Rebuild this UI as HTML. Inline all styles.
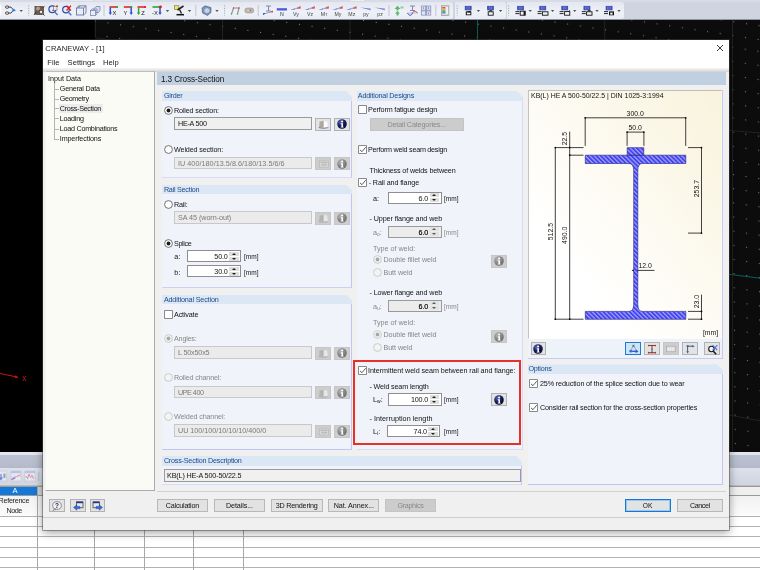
<!DOCTYPE html><html><head><meta charset="utf-8"><title>CRANEWAY - [1]</title><style>
*{box-sizing:border-box;margin:0;padding:0}
html,body{will-change:transform;width:760px;height:570px;overflow:hidden;background:#000}
body{position:relative;font-family:"Liberation Sans",sans-serif;font-size:7.2px;color:#111;line-height:1}
.a{position:absolute}
.t{position:absolute;white-space:nowrap;line-height:10px;height:10px}
.dlg{position:absolute;overflow:hidden;left:43px;top:40px;width:686.4px;height:490px;background:#f0f0f0;box-shadow:0 0 0 0.7px rgba(70,70,70,.7),0 2px 9px rgba(0,0,0,.42)}
.grp{position:absolute;background:#f0f4fa;clip-path:polygon(0 0,calc(100% - 5.8px) 0,100% 5.8px,100% 100%,0 100%)}
.grp:before{content:"";position:absolute;right:0;top:5.8px;bottom:0;width:1px;background:#c2c4f3}
.grp:after{content:"";position:absolute;left:0;right:0;bottom:0;height:1px;background:#c2c4f3}
.gh{position:absolute;left:0;top:0;right:0;height:9.6px;background:#dce7f6;color:#1c4a8a;line-height:10px;padding-left:0.8px}
.inp{position:absolute;background:#f0f0f0;border:1px solid #9a9a9a;line-height:12px;padding-left:3px;white-space:nowrap;height:12.5px}
.inp.d{background:#ebebeb;border-color:#c8c8c8;color:#7a7a7a}
.spin{position:absolute;background:#fff;border:1px solid #8e8e8e;height:12.3px;line-height:11.6px;text-align:right;padding-right:12.4px;white-space:nowrap}
.spin.d{background:#ececec;border-color:#9a9a9a;color:#151515;text-shadow:0 0 0.5px #444}
.spin i{position:absolute;right:1.3px;top:0.8px;width:9.7px;bottom:0.8px;background:linear-gradient(#dedede 0,#dedede 46%,#fff 46%,#fff 54%,#dedede 54%)}
.spin i:before{content:"";position:absolute;left:2.4px;top:0.9px;border:2.4px solid transparent;border-top:0;border-bottom:2.8px solid #222}
.spin i:after{content:"";position:absolute;left:2.4px;bottom:0.9px;border:2.4px solid transparent;border-bottom:0;border-top:2.8px solid #222}
.spin.d i{background:linear-gradient(#e2e2e2 0,#e2e2e2 46%,#ececec 46%,#ececec 54%,#e2e2e2 54%)}
.spin.d i:before{border-bottom-color:#5c5c5c}.spin.d i:after{border-top-color:#5c5c5c}
.btn{position:absolute;background:#e2e2e2;border:1px solid #b8b8b8;text-align:center;white-space:nowrap;line-height:11px;height:13px}
.btn.d{background:#cccccc;border-color:#c4c4c4;color:#8a8a8a}
.ib{position:absolute;width:15.5px;height:13px;background:#e3e3e3;border:1px solid #b2b2b2}
.ib.d{background:#cdcdcd;border-color:#c6c6c6}
.cb{position:absolute;width:8.9px;height:8.9px;background:#fff;border:1px solid #666;border-radius:0.8px}
.cb.c:after{content:"";position:absolute;left:2.5px;top:-0.1px;width:2.6px;height:5.6px;border:solid #333;border-width:0 0.8px 0.8px 0;transform:rotate(40deg)}
.rb{position:absolute;width:8.4px;height:8.4px;border-radius:50%;background:#fff;border:1px solid #555}
.rb.c:after{content:"";position:absolute;left:1.6px;top:1.6px;width:3.2px;height:3.2px;border-radius:50%;background:#222}
.rb.d{border-color:#bbb;background:#f6f6f6}.rb.d.c:after{background:#aaa}
.g{color:#868686}
</style></head><body>
<svg width="0" height="0" style="position:absolute"><defs><radialGradient id="gie" cx="0.35" cy="0.3" r="0.75"><stop offset="0" stop-color="#5868b4"/><stop offset="0.55" stop-color="#141c5c"/><stop offset="1" stop-color="#05052a"/></radialGradient><radialGradient id="gid" cx="0.35" cy="0.3" r="0.75"><stop offset="0" stop-color="#b4b4b4"/><stop offset="0.6" stop-color="#858585"/><stop offset="1" stop-color="#6a6a6a"/></radialGradient></defs></svg>
<svg class="a" style="left:0;top:20px" width="760" height="432" viewBox="0 20 760 432"><defs><pattern id="dots" width="1" height="1" patternUnits="userSpaceOnUse" patternTransform="matrix(12.63 1.95 1 -13.8 107.4 23.3)"><rect x="0" y="0" width="0.085" height="0.08" fill="#7a7a7a"/></pattern><pattern id="dots2" width="1" height="1" patternUnits="userSpaceOnUse" patternTransform="matrix(12.63 1.95 0.1 14.15 732.7 145.7)"><rect x="0" y="0" width="0.085" height="0.075" fill="#7a7a7a"/></pattern></defs><rect x="0" y="20" width="760" height="432" fill="#000"/><rect x="95" y="20" width="665" height="20" fill="#0c0c0c"/><rect x="729" y="40" width="31" height="412" fill="#0c0c0c"/><rect x="95" y="20" width="665" height="20" fill="url(#dots)"/><rect x="729" y="40" width="31" height="412" fill="url(#dots2)"/><path d="M95.3 20V37.5" stroke="#3a3a3a" stroke-width="0.6"/><path d="M95 37.5Q103 39 110 40" stroke="#2a2a2a" stroke-width="0.6" fill="none"/><path d="M222.5 20V40M350 20V40M604.7 20V40M732.5 20V452" stroke="#2c2c2c" stroke-width="0.7"/><line x1="0" y1="373.5" x2="17" y2="377" stroke="#d01010" stroke-width="1"/><path d="M15 375.3 L19 377.4 L15 378.3Z" fill="#d01010"/><text x="22.3" y="380.6" font-size="8.6" fill="#c81818" font-family="Liberation Sans, sans-serif">x</text><line x1="477.5" y1="20" x2="477.5" y2="40" stroke="#0a5a5a" stroke-width="1"/><line x1="729" y1="130.3" x2="760" y2="133" stroke="#2c2c2c" stroke-width="0.7"/><line x1="729" y1="274.3" x2="760" y2="278.2" stroke="#0a6a6a" stroke-width="0.9"/><line x1="729" y1="415" x2="760" y2="420.8" stroke="#2c2c2c" stroke-width="0.7"/></svg>
<div class="a" style="left:0;top:0;width:760px;height:20px;background:#cfd4e1"></div>
<div class="a" style="left:0;top:0;width:760px;height:2.4px;background:#d7dbe6"></div>
<div class="a" style="left:71px;top:0;width:22px;height:1.2px;background:#e6e9f0"></div><div class="a" style="left:95px;top:0;width:38px;height:1.2px;background:#e0e3ec"></div><div class="a" style="left:351px;top:0;width:12.5px;height:1.2px;background:#eceef4"></div>
<div class="a" style="left:0.0px;top:2.4px;width:453.0px;height:16.4px;background:linear-gradient(#e4e7f0,#eff1f8 60%,#e9ecf4);border-radius:0 2.5px 2.5px 0"></div>
<div class="a" style="left:455.0px;top:2.4px;width:51.0px;height:16.4px;background:linear-gradient(#e4e7f0,#eff1f8 60%,#e9ecf4);border-radius:0 2.5px 2.5px 0"></div>
<div class="a" style="left:507.0px;top:2.4px;width:116.7px;height:16.4px;background:linear-gradient(#e4e7f0,#eff1f8 60%,#e9ecf4);border-radius:0 2.5px 2.5px 0"></div>
<div class="a" style="left:0;top:18.8px;width:760px;height:1.2px;background:linear-gradient(#c4c9d6,#5a5d66)"></div>
<div class="a" style="left:0;top:452px;width:760px;height:118px;background:#fff"></div>
<div class="a" style="left:0;top:452px;width:760px;height:3px;background:#e2e5ed"></div>
<div class="a" style="left:0;top:454.6px;width:760px;height:13.6px;background:linear-gradient(#bcc2d0,#b4bac9)"></div>
<div class="a" style="left:0;top:468px;width:760px;height:16.5px;background:linear-gradient(#dde1ec,#cfd4e0)"></div>
<div class="a" style="left:0;top:484.3px;width:760px;height:2.4px;background:linear-gradient(#e8e8e8,#8c8c8c)"></div>
<svg class="a" style="left:0;top:470px" width="42" height="13" viewBox="0 0 42 13"><rect x="-3" y="1" width="9.5" height="10" fill="#e4e8f2" stroke="#b8bdd0" stroke-width="0.5"/><path d="M1 4V9M-0.5 7.5L1 9.5L2.5 7.5" stroke="#6a86d0" stroke-width="1.2" fill="none"/><rect x="3.4" y="3.5" width="2" height="4.5" fill="#9a9eb0"/><rect x="11" y="1" width="10" height="10" fill="#e9ecf4" stroke="#b8bdd0" stroke-width="0.5"/><rect x="11" y="1" width="10" height="2.2" fill="#b9c4e2"/><path d="M11.5 8.7L20.5 4.8" stroke="#e06a78" stroke-width="0.8"/><path d="M11.5 9.6L15.5 8" stroke="#5a6ee0" stroke-width="1"/><path d="M11 6.5H21M14.3 3.2V11M17.6 3.2V11" stroke="#c4c9da" stroke-width="0.4"/><rect x="25" y="1" width="10" height="10" fill="#e9ecf4" stroke="#b8bdd0" stroke-width="0.5"/><rect x="25" y="1" width="10" height="2.2" fill="#b9c4e2"/><path d="M26 6L27.5 8.5L29 4L30.5 7.5L32 5L33.5 9" stroke="#e8687c" stroke-width="0.8" fill="none"/><path d="M25 6.5H35M28.3 3.2V11M31.6 3.2V11" stroke="#c4c9da" stroke-width="0.4"/><path d="M38.7 1.5V11" stroke="#aab0c2" stroke-width="0.7"/></svg>
<div class="a" style="left:0;top:486.7px;width:760px;height:8.6px;background:#efefef"></div>
<div class="a" style="left:37.5px;top:486.7px;width:5.5px;height:8.6px;background:#d4d4d4"></div>
<div class="a" style="left:0;top:486.7px;width:37px;height:8.4px;background:#1478d7"></div>
<div class="t" style="left:11px;top:486px;width:8px;text-align:center;color:#fff;font-size:7.6px">A</div>
<div class="a" style="left:0;top:495.1px;width:760px;height:1px;background:#9a9a9a"></div>
<div class="a" style="left:0;top:496px;width:760px;height:20.4px;background:linear-gradient(#f1f1f1,#fcfcfc)"></div>
<div class="t" style="left:-1.4px;top:495.8px;color:#222;letter-spacing:-0.295px">Reference</div>
<div class="t" style="left:6.4px;top:505.6px;color:#222;letter-spacing:-0.413px">Node</div>
<div class="a" style="left:0;top:516.3px;width:760px;height:1px;background:#b2b2b2"></div>
<div class="a" style="left:0;top:526.2px;width:760px;height:1px;background:#b2b2b2"></div>
<div class="a" style="left:0;top:536.3px;width:760px;height:1px;background:#b2b2b2"></div>
<div class="a" style="left:0;top:546.5px;width:760px;height:1px;background:#b2b2b2"></div>
<div class="a" style="left:0;top:556.6px;width:760px;height:1px;background:#b2b2b2"></div>
<div class="a" style="left:0;top:566.8px;width:760px;height:1px;background:#b2b2b2"></div>
<div class="a" style="left:37.3px;top:486.7px;width:1px;height:84px;background:#a8a8a8"></div>
<div class="a" style="left:93.8px;top:486.7px;width:1px;height:84px;background:#a8a8a8"></div>
<div class="a" style="left:143.8px;top:486.7px;width:1px;height:84px;background:#a8a8a8"></div>
<div class="a" style="left:193.3px;top:486.7px;width:1px;height:84px;background:#a8a8a8"></div>
<div class="a" style="left:243.3px;top:486.7px;width:1px;height:84px;background:#a8a8a8"></div>
<div class="dlg">
<div class="a" style="left:0;top:0;width:687px;height:28px;background:#fff"></div>
<div class="t" style="left:2.3px;top:3.5px;font-size:7.6px;color:#222;letter-spacing:0.1px">CRANEWAY - [1]</div>
<svg class="a" style="left:673px;top:4px" width="8" height="8" viewBox="0 0 8 8"><path d="M1 1L7 7M7 1L1 7" stroke="#222" stroke-width="0.9" fill="none"/></svg>
<div class="t" style="left:4.3px;top:17.5px;font-size:7.6px;color:#222">File</div>
<div class="t" style="left:24.6px;top:17.5px;font-size:7.6px;color:#222">Settings</div>
<div class="t" style="left:60.0px;top:17.5px;font-size:7.6px;color:#222">Help</div>
<div class="a" style="left:0;top:28px;width:687px;height:4px;background:linear-gradient(#f6f6f6,#e2e2e2 60%,#cfcfcf)"></div>
<div class="a" style="left:1.5px;top:31px;width:110.5px;height:420px;background:#fbfbf6;border:1px solid #ababab;border-left-color:#f4f4f0;border-top-color:#bebebe"></div>
<div class="a" style="left:10.5px;top:42px;width:1px;height:56.5px;background:#b4b4b4"></div>
<div class="t" style="left:5px;top:33.5px;letter-spacing:-0.008px">Input Data</div>
<div class="a" style="left:11px;top:48.5px;width:5px;height:1px;background:#b4b4b4"></div>
<div class="t" style="left:16.8px;top:43.9px;letter-spacing:-0.234px">General Data</div>
<div class="a" style="left:11px;top:58.5px;width:5px;height:1px;background:#b4b4b4"></div>
<div class="t" style="left:16.8px;top:53.9px;letter-spacing:-0.340px">Geometry</div>
<div class="a" style="left:11px;top:68.3px;width:5px;height:1px;background:#b4b4b4"></div>
<div class="a" style="left:15.7px;top:63.9px;width:44.5px;height:9.2px;background:#ececec"></div>
<div class="t" style="left:16.8px;top:63.7px;letter-spacing:-0.297px">Cross-Section</div>
<div class="a" style="left:11px;top:78.4px;width:5px;height:1px;background:#b4b4b4"></div>
<div class="t" style="left:16.8px;top:73.8px;letter-spacing:-0.249px">Loading</div>
<div class="a" style="left:11px;top:88.5px;width:5px;height:1px;background:#b4b4b4"></div>
<div class="t" style="left:16.8px;top:83.9px;letter-spacing:-0.263px">Load Combinations</div>
<div class="a" style="left:11px;top:98.5px;width:5px;height:1px;background:#b4b4b4"></div>
<div class="t" style="left:16.8px;top:93.9px;letter-spacing:-0.135px">Imperfections</div>
<div class="a" style="left:114px;top:32px;width:569px;height:13px;background:#c1d0e1"></div>
<div class="t" style="left:118px;top:35.1px;font-size:8.2px;color:#111;letter-spacing:-0.118px">1.3 Cross-Section</div>
<div class="a" style="left:114px;top:450.5px;width:569px;height:1px;background:#d2d2d2"></div>
<div class="a" style="left:0;top:476.5px;width:686px;height:1px;background:#cdcdcd"></div>
<div class="grp" style="left:119.2px;top:51.0px;width:189.8px;height:86.5px"><div class="gh" style="letter-spacing:-0.242px;padding-left:1.7px">Girder</div></div>
<svg class="a" style="left:120.5px;top:65.5px" width="9" height="9" viewBox="0 0 9 9"><circle cx="4.5" cy="4.5" r="3.9" fill="#fff" stroke="#4a4a4a" stroke-width="0.75"/><circle cx="4.5" cy="4.5" r="1.9" fill="#1a1a1a"/></svg>
<div class="t " style="left:131.0px;top:65.5px;letter-spacing:-0.151px;">Rolled section:</div>
<div class="inp" style="left:131.0px;top:77.3px;width:138.3px;letter-spacing:-0.265px">HE-A 500</div>
<div class="ib" style="left:272.0px;top:77.7px"><svg class="a" style="left:2.2px;top:1.6px" width="11" height="9" viewBox="0 0 11 9"><path d="M0.8 7.6L5.4 8.2L10.3 7.6" stroke="#56648c" stroke-width="0.9" fill="none"/><path d="M1.6 1.6L5.2 0.9V7.2L1.2 7.3Z" fill="#b4a898"/><path d="M5.4 0.9L9.2 1.5L9.9 7.2L5.4 7.2Z" fill="#fbfbfb"/><path d="M5.3 0.9V7.3" stroke="#6a6a6a" stroke-width="0.4"/></svg></div>
<div class="ib" style="left:291.3px;top:77.7px"><svg class="a" style="left:1.8px;top:0.5px" width="10" height="10" viewBox="0 0 9 9"><circle cx="4.5" cy="4.5" r="4.3" fill="url(#gie)"/><circle cx="4.6" cy="2.3" r="0.95" fill="#fff"/><path d="M3.4 3.9h2v3h.6v.8H3.3v-.8h.7V4.7h-.6z" fill="#fff"/></svg></div>
<svg class="a" style="left:120.5px;top:105.0px" width="9" height="9" viewBox="0 0 9 9"><circle cx="4.5" cy="4.5" r="3.9" fill="#fff" stroke="#4a4a4a" stroke-width="0.75"/></svg>
<div class="t " style="left:131.0px;top:105.0px;letter-spacing:-0.134px;">Welded section:</div>
<div class="inp d" style="left:131.0px;top:116.7px;width:138.3px;letter-spacing:0.048px">IU 400/180/13.5/8.6/180/13.5/6/6</div>
<div class="ib d" style="left:272.0px;top:117.2px"><svg class="a" style="left:2.5px;top:2px" width="10" height="8" viewBox="0 0 10 8"><rect x="0.7" y="1" width="8.6" height="6" fill="#d9d9d9" stroke="#b0b0b0" stroke-width="0.5"/><path d="M1.6 2.6h6.8" stroke="#a6a6a6" stroke-width="0.7"/><path d="M2.4 5c1-1.2 2 .8 3 0s1.6-.8 2.6 .2" stroke="#9a9a9a" stroke-width="0.8" fill="none"/></svg></div>
<div class="ib d" style="left:291.3px;top:117.2px"><svg class="a" style="left:1.8px;top:0.5px" width="10" height="10" viewBox="0 0 9 9"><circle cx="4.5" cy="4.5" r="4.3" fill="url(#gid)"/><circle cx="4.6" cy="2.3" r="0.95" fill="#fff"/><path d="M3.4 3.9h2v3h.6v.8H3.3v-.8h.7V4.7h-.6z" fill="#fff"/></svg></div>
<div class="grp" style="left:119.2px;top:144.7px;width:189.8px;height:103.0px"><div class="gh" style="letter-spacing:-0.241px;padding-left:1.7px">Rail Section</div></div>
<svg class="a" style="left:120.5px;top:159.5px" width="9" height="9" viewBox="0 0 9 9"><circle cx="4.5" cy="4.5" r="3.9" fill="#fff" stroke="#4a4a4a" stroke-width="0.75"/></svg>
<div class="t " style="left:131.0px;top:159.5px;letter-spacing:-0.187px;">Rail:</div>
<div class="inp d" style="left:131.0px;top:171.2px;width:138.3px;letter-spacing:-0.046px">SA 45 (worn-out)</div>
<div class="ib d" style="left:272.0px;top:171.7px"><svg class="a" style="left:2.2px;top:1.6px" width="11" height="9" viewBox="0 0 11 9"><path d="M0.8 7.6L5.4 8.2L10.3 7.6" stroke="#a4a4a4" stroke-width="0.9" fill="none"/><path d="M1.6 1.6L5.2 0.9V7.2L1.2 7.3Z" fill="#b4b4b4"/><path d="M5.4 0.9L9.2 1.5L9.9 7.2L5.4 7.2Z" fill="#e6e6e6"/><path d="M5.3 0.9V7.3" stroke="#999" stroke-width="0.4"/></svg></div>
<div class="ib d" style="left:291.3px;top:171.7px"><svg class="a" style="left:1.8px;top:0.5px" width="10" height="10" viewBox="0 0 9 9"><circle cx="4.5" cy="4.5" r="4.3" fill="url(#gid)"/><circle cx="4.6" cy="2.3" r="0.95" fill="#fff"/><path d="M3.4 3.9h2v3h.6v.8H3.3v-.8h.7V4.7h-.6z" fill="#fff"/></svg></div>
<svg class="a" style="left:120.5px;top:198.8px" width="9" height="9" viewBox="0 0 9 9"><circle cx="4.5" cy="4.5" r="3.9" fill="#fff" stroke="#4a4a4a" stroke-width="0.75"/><circle cx="4.5" cy="4.5" r="1.9" fill="#1a1a1a"/></svg>
<div class="t " style="left:131.0px;top:198.8px;letter-spacing:-0.355px;">Splice</div>
<div class="t " style="left:131.3px;top:212.0px;letter-spacing:0.124px;">a:</div>
<div class="spin" style="left:144.1px;top:210.0px;width:54.0px;letter-spacing:-0.159px">50.0<i></i></div>
<div class="t " style="left:201.0px;top:212.0px;font-size:6.5px;">[mm]</div>
<div class="t " style="left:131.3px;top:227.5px;letter-spacing:0.319px;">b:</div>
<div class="spin" style="left:144.1px;top:225.1px;width:54.0px;letter-spacing:-0.159px">30.0<i></i></div>
<div class="t " style="left:201.0px;top:227.5px;font-size:6.5px;">[mm]</div>
<div class="grp" style="left:119.2px;top:254.7px;width:189.8px;height:155.5px"><div class="gh" style="letter-spacing:-0.158px;padding-left:1.7px">Additional Section</div></div>
<svg class="a" style="left:121.0px;top:269.6px" width="9" height="9" viewBox="0 0 9 9"><rect x="0.4" y="0.4" width="8.2" height="8.2" rx="0.6" fill="#fff" stroke="#5c5c5c" stroke-width="0.8"/></svg>
<div class="t " style="left:131.0px;top:269.5px;letter-spacing:-0.164px;">Activate</div>
<svg class="a" style="left:120.5px;top:294.1px" width="9" height="9" viewBox="0 0 9 9"><circle cx="4.5" cy="4.5" r="3.9" fill="#f4f4f4" stroke="#bdbdbd" stroke-width="0.75"/><circle cx="4.5" cy="4.5" r="1.9" fill="#a8a8a8"/></svg>
<div class="t g" style="left:131.0px;top:294.1px;letter-spacing:-0.205px;">Angles:</div>
<div class="inp d" style="left:131.0px;top:306.0px;width:138.3px;letter-spacing:-0.167px">L 50x50x5</div>
<div class="ib d" style="left:272.0px;top:306.5px"><svg class="a" style="left:2.2px;top:1.6px" width="11" height="9" viewBox="0 0 11 9"><path d="M0.8 7.6L5.4 8.2L10.3 7.6" stroke="#a4a4a4" stroke-width="0.9" fill="none"/><path d="M1.6 1.6L5.2 0.9V7.2L1.2 7.3Z" fill="#b4b4b4"/><path d="M5.4 0.9L9.2 1.5L9.9 7.2L5.4 7.2Z" fill="#e6e6e6"/><path d="M5.3 0.9V7.3" stroke="#999" stroke-width="0.4"/></svg></div>
<div class="ib d" style="left:291.3px;top:306.5px"><svg class="a" style="left:1.8px;top:0.5px" width="10" height="10" viewBox="0 0 9 9"><circle cx="4.5" cy="4.5" r="4.3" fill="url(#gid)"/><circle cx="4.6" cy="2.3" r="0.95" fill="#fff"/><path d="M3.4 3.9h2v3h.6v.8H3.3v-.8h.7V4.7h-.6z" fill="#fff"/></svg></div>
<svg class="a" style="left:120.5px;top:332.5px" width="9" height="9" viewBox="0 0 9 9"><circle cx="4.5" cy="4.5" r="3.9" fill="#f4f4f4" stroke="#bdbdbd" stroke-width="0.75"/></svg>
<div class="t g" style="left:131.0px;top:332.5px;letter-spacing:-0.165px;">Rolled channel:</div>
<div class="inp d" style="left:131.0px;top:345.5px;width:138.3px;letter-spacing:-0.478px">UPE 400</div>
<div class="ib d" style="left:272.0px;top:346.0px"><svg class="a" style="left:2.2px;top:1.6px" width="11" height="9" viewBox="0 0 11 9"><path d="M0.8 7.6L5.4 8.2L10.3 7.6" stroke="#a4a4a4" stroke-width="0.9" fill="none"/><path d="M1.6 1.6L5.2 0.9V7.2L1.2 7.3Z" fill="#b4b4b4"/><path d="M5.4 0.9L9.2 1.5L9.9 7.2L5.4 7.2Z" fill="#e6e6e6"/><path d="M5.3 0.9V7.3" stroke="#999" stroke-width="0.4"/></svg></div>
<div class="ib d" style="left:291.3px;top:346.0px"><svg class="a" style="left:1.8px;top:0.5px" width="10" height="10" viewBox="0 0 9 9"><circle cx="4.5" cy="4.5" r="4.3" fill="url(#gid)"/><circle cx="4.6" cy="2.3" r="0.95" fill="#fff"/><path d="M3.4 3.9h2v3h.6v.8H3.3v-.8h.7V4.7h-.6z" fill="#fff"/></svg></div>
<svg class="a" style="left:120.5px;top:371.7px" width="9" height="9" viewBox="0 0 9 9"><circle cx="4.5" cy="4.5" r="3.9" fill="#f4f4f4" stroke="#bdbdbd" stroke-width="0.75"/></svg>
<div class="t g" style="left:131.0px;top:371.7px;letter-spacing:-0.148px;">Welded channel:</div>
<div class="inp d" style="left:131.0px;top:384.2px;width:138.3px;letter-spacing:-0.007px">UU 100/100/10/10/10/400/0</div>
<div class="ib d" style="left:272.0px;top:384.7px"><svg class="a" style="left:2.5px;top:2px" width="10" height="8" viewBox="0 0 10 8"><rect x="0.7" y="1" width="8.6" height="6" fill="#d9d9d9" stroke="#b0b0b0" stroke-width="0.5"/><path d="M1.6 2.6h6.8" stroke="#a6a6a6" stroke-width="0.7"/><path d="M2.4 5c1-1.2 2 .8 3 0s1.6-.8 2.6 .2" stroke="#9a9a9a" stroke-width="0.8" fill="none"/></svg></div>
<div class="ib d" style="left:291.3px;top:384.7px"><svg class="a" style="left:1.8px;top:0.5px" width="10" height="10" viewBox="0 0 9 9"><circle cx="4.5" cy="4.5" r="4.3" fill="url(#gid)"/><circle cx="4.6" cy="2.3" r="0.95" fill="#fff"/><path d="M3.4 3.9h2v3h.6v.8H3.3v-.8h.7V4.7h-.6z" fill="#fff"/></svg></div>
<div class="grp" style="left:119.2px;top:416.0px;width:359.8px;height:28.5px"><div class="gh" style="letter-spacing:-0.212px;padding-left:1.7px">Cross-Section Description</div></div>
<div class="inp" style="padding-left:1.7px;left:121.4px;top:429.0px;width:356.5px;letter-spacing:-0.147px">KB(L) HE-A 500-50/22.5</div>
<div class="grp" style="left:314.0px;top:51.0px;width:165.5px;height:358.5px"><div class="gh" style="letter-spacing:-0.182px;padding-left:0.8px">Additional Designs</div></div>
<svg class="a" style="left:315.0px;top:65.1px" width="9" height="9" viewBox="0 0 9 9"><rect x="0.4" y="0.4" width="8.2" height="8.2" rx="0.6" fill="#fff" stroke="#5c5c5c" stroke-width="0.8"/></svg>
<div class="t " style="left:325.0px;top:65.0px;letter-spacing:-0.151px;">Perform fatigue design</div>
<div class="btn d" style="left:326.7px;top:78.2px;width:94.0px;letter-spacing:-0.142px;text-indent:-0.142px;">Detail Categories...</div>
<svg class="a" style="left:315.0px;top:105.1px" width="9" height="9" viewBox="0 0 9 9"><rect x="0.4" y="0.4" width="8.2" height="8.2" rx="0.6" fill="#fff" stroke="#5c5c5c" stroke-width="0.8"/><path d="M2 4.9L4 6.7L7.7 2.2" fill="none" stroke="#2a2a2a" stroke-width="0.75"/></svg>
<div class="t " style="left:325.0px;top:105.0px;letter-spacing:-0.252px;">Perform weld seam design</div>
<div class="t " style="left:326.5px;top:125.8px;letter-spacing:-0.149px;">Thickness of welds between</div>
<svg class="a" style="left:315.0px;top:138.2px" width="9" height="9" viewBox="0 0 9 9"><rect x="0.4" y="0.4" width="8.2" height="8.2" rx="0.6" fill="#fff" stroke="#5c5c5c" stroke-width="0.8"/><path d="M2 4.9L4 6.7L7.7 2.2" fill="none" stroke="#2a2a2a" stroke-width="0.75"/></svg>
<div class="t " style="left:325.7px;top:138.1px;letter-spacing:-0.114px;">- Rail and flange</div>
<div class="t " style="left:330.0px;top:153.5px;letter-spacing:0.124px;">a:</div>
<div class="spin" style="left:345.0px;top:151.5px;width:53.5px;letter-spacing:-0.141px">6.0<i></i></div>
<div class="t " style="left:401.0px;top:153.5px;font-size:6.5px;">[mm]</div>
<div class="t " style="left:326.5px;top:173.9px;letter-spacing:-0.098px;">- Upper flange and web</div>
<div class="t g" style="left:330.0px;top:187.5px;letter-spacing:0.000px;">a<span style="font-size:5px;vertical-align:-1px">o</span>:</div>
<div class="spin d" style="left:345.0px;top:185.5px;width:53.5px;letter-spacing:-0.141px">6.0<i></i></div>
<div class="t g" style="left:401.0px;top:187.5px;font-size:6.5px;">[mm]</div>
<div class="t g" style="left:330.0px;top:203.5px;letter-spacing:-0.016px;">Type of weld:</div>
<svg class="a" style="left:330.1px;top:215.2px" width="9" height="9" viewBox="0 0 9 9"><circle cx="4.5" cy="4.5" r="3.9" fill="#f4f4f4" stroke="#bdbdbd" stroke-width="0.75"/><circle cx="4.5" cy="4.5" r="1.9" fill="#a8a8a8"/></svg>
<div class="t g" style="left:340.4px;top:215.2px;letter-spacing:-0.071px;">Double fillet weld</div>
<svg class="a" style="left:330.1px;top:227.9px" width="9" height="9" viewBox="0 0 9 9"><circle cx="4.5" cy="4.5" r="3.9" fill="#f4f4f4" stroke="#bdbdbd" stroke-width="0.75"/></svg>
<div class="t g" style="left:340.4px;top:227.9px;letter-spacing:-0.059px;">Butt weld</div>
<div class="ib d" style="left:448.3px;top:214.7px"><svg class="a" style="left:1.8px;top:0.5px" width="10" height="10" viewBox="0 0 9 9"><circle cx="4.5" cy="4.5" r="4.3" fill="url(#gid)"/><circle cx="4.6" cy="2.3" r="0.95" fill="#fff"/><path d="M3.4 3.9h2v3h.6v.8H3.3v-.8h.7V4.7h-.6z" fill="#fff"/></svg></div>
<div class="t " style="left:326.5px;top:248.1px;letter-spacing:-0.091px;">- Lower flange and web</div>
<div class="t g" style="left:330.0px;top:261.5px;letter-spacing:0.000px;">a<span style="font-size:5px;vertical-align:-1px">u</span>:</div>
<div class="spin d" style="left:345.0px;top:259.7px;width:53.5px;letter-spacing:-0.141px">6.0<i></i></div>
<div class="t g" style="left:401.0px;top:261.5px;font-size:6.5px;">[mm]</div>
<div class="t g" style="left:330.0px;top:277.9px;letter-spacing:-0.016px;">Type of weld:</div>
<svg class="a" style="left:330.1px;top:289.9px" width="9" height="9" viewBox="0 0 9 9"><circle cx="4.5" cy="4.5" r="3.9" fill="#f4f4f4" stroke="#bdbdbd" stroke-width="0.75"/><circle cx="4.5" cy="4.5" r="1.9" fill="#a8a8a8"/></svg>
<div class="t g" style="left:340.4px;top:289.9px;letter-spacing:-0.071px;">Double fillet weld</div>
<svg class="a" style="left:330.1px;top:302.9px" width="9" height="9" viewBox="0 0 9 9"><circle cx="4.5" cy="4.5" r="3.9" fill="#f4f4f4" stroke="#bdbdbd" stroke-width="0.75"/></svg>
<div class="t g" style="left:340.4px;top:302.9px;letter-spacing:-0.059px;">Butt weld</div>
<div class="ib d" style="left:448.3px;top:290.0px"><svg class="a" style="left:1.8px;top:0.5px" width="10" height="10" viewBox="0 0 9 9"><circle cx="4.5" cy="4.5" r="4.3" fill="url(#gid)"/><circle cx="4.6" cy="2.3" r="0.95" fill="#fff"/><path d="M3.4 3.9h2v3h.6v.8H3.3v-.8h.7V4.7h-.6z" fill="#fff"/></svg></div>
<div class="a" style="left:310.3px;top:319.6px;width:167.6px;height:85.9px;border:2px solid #e6302c"></div>
<svg class="a" style="left:315.0px;top:325.6px" width="9" height="9" viewBox="0 0 9 9"><rect x="0.4" y="0.4" width="8.2" height="8.2" rx="0.6" fill="#fff" stroke="#5c5c5c" stroke-width="0.8"/><path d="M2 4.9L4 6.7L7.7 2.2" fill="none" stroke="#2a2a2a" stroke-width="0.75"/></svg>
<div class="t " style="left:325.0px;top:325.5px;letter-spacing:-0.068px;">Intermittent weld seam between rail and flange:</div>
<div class="t " style="left:326.5px;top:341.8px;letter-spacing:-0.151px;">- Weld seam length</div>
<div class="t " style="left:330.0px;top:355.2px;letter-spacing:0.000px;">L<span style="font-size:5px;vertical-align:-1px">w</span>:</div>
<div class="spin" style="left:345.0px;top:353.4px;width:53.5px;letter-spacing:-0.168px">100.0<i></i></div>
<div class="t " style="left:401.0px;top:355.2px;font-size:6.5px;">[mm]</div>
<div class="ib" style="left:448.3px;top:353.0px"><svg class="a" style="left:1.8px;top:0.5px" width="10" height="10" viewBox="0 0 9 9"><circle cx="4.5" cy="4.5" r="4.3" fill="url(#gie)"/><circle cx="4.6" cy="2.3" r="0.95" fill="#fff"/><path d="M3.4 3.9h2v3h.6v.8H3.3v-.8h.7V4.7h-.6z" fill="#fff"/></svg></div>
<div class="t " style="left:326.5px;top:373.5px;letter-spacing:0.029px;">- Interruption length</div>
<div class="t " style="left:330.0px;top:387.0px;letter-spacing:0.000px;">L<span style="font-size:5px;vertical-align:-1px">i</span>:</div>
<div class="spin" style="left:343.8px;top:385.0px;width:53.5px;letter-spacing:-0.159px">74.0<i></i></div>
<div class="t " style="left:401.0px;top:387.0px;font-size:6.5px;">[mm]</div>
<div class="a" style="left:484.6px;top:49.6px;width:195.4px;height:269px;background:#eef2f9;border-right:1px solid #c6c8f6;border-bottom:1px solid #c6c8f6"></div>
<svg class="a" style="left:484.5px;top:50.4px" width="194.5" height="248.6" viewBox="527.5 90.4 194.5 248.6">
<defs><linearGradient id="dg" x1="1" y1="0" x2="0" y2="1"><stop offset="0" stop-color="#f9f3dc"/><stop offset="0.75" stop-color="#ffffff"/></linearGradient><pattern id="hat" width="2.9" height="3.1" patternUnits="userSpaceOnUse" patternTransform="rotate(45)"><rect width="2.9" height="3.1" fill="#4242f0"/><rect width="2.9" height="1.25" fill="#a2a2ff"/></pattern></defs>
<rect x="527.5" y="90.4" width="194.5" height="248.6" fill="#fff"/><rect x="527.5" y="90.4" width="193.6" height="248.6" fill="url(#dg)"/>
<path d="M527.85 339V90.8H721.2" fill="none" stroke="#a2a2a0" stroke-width="0.75"/>
<text x="530.5" y="98.4" textLength="132.5" lengthAdjust="spacingAndGlyphs" font-family="Liberation Sans, sans-serif" font-size="6.9" fill="#111">KB(L) HE A 500-50/22.5 | DIN 1025-3:1994</text>
<g stroke="#111" stroke-width="0.8" fill="none">
<path d="M584.7 118.2H685.2M584.7 118.2V146.3M685.2 118.2V146.3"/>
<path d="M626.6 132.5H643.4M626.6 132.5V146.3M643.4 132.5V146.3"/>
<path d="M554.8 148V319.6M554.8 148H583M554.8 319.6H583M569.2 132V319.6M569.2 155.6H583"/>
<path d="M701 148V233.5M687.5 148H701M687.5 233.5H701M701 295V319.6M687.5 311.8H701M687.5 319.6H701"/>
<path d="M631.4 270.8H654"/>
</g>
<circle cx="584.7" cy="118.2" r="0.85" fill="#000"/>
<circle cx="685.2" cy="118.2" r="0.85" fill="#000"/>
<circle cx="626.6" cy="132.5" r="0.85" fill="#000"/>
<circle cx="643.4" cy="132.5" r="0.85" fill="#000"/>
<circle cx="554.8" cy="148.0" r="0.85" fill="#000"/>
<circle cx="554.8" cy="319.6" r="0.85" fill="#000"/>
<circle cx="569.2" cy="148.0" r="0.85" fill="#000"/>
<circle cx="569.2" cy="155.6" r="0.85" fill="#000"/>
<circle cx="569.2" cy="319.6" r="0.85" fill="#000"/>
<circle cx="701.0" cy="148.0" r="0.85" fill="#000"/>
<circle cx="701.0" cy="233.5" r="0.85" fill="#000"/>
<circle cx="701.0" cy="311.8" r="0.85" fill="#000"/>
<circle cx="701.0" cy="319.6" r="0.85" fill="#000"/>
<circle cx="633.0" cy="270.8" r="0.85" fill="#000"/>
<circle cx="637.0" cy="270.8" r="0.85" fill="#000"/>
<path d="M584.8 155.6 H685.3 V163.9 H642.1 Q637.3 163.9 637.3 171.1 V304.6 Q637.3 311.8 642.1 311.8 H685.3 V319.7 H584.8 V311.8 H628.4 Q633.2 311.8 633.2 304.6 V171.1 Q633.2 163.9 628.4 163.9 H584.8 Z" fill="url(#hat)" stroke="#1c1c70" stroke-width="0.6"/>
<path d="M626.7 148.1H643.3V155.6H626.7Z" fill="url(#hat)" stroke="#1c1c70" stroke-width="0.6"/>
<text x="634.7" y="116.4" text-anchor="middle" font-family="Liberation Sans, sans-serif" font-size="6.9" fill="#111">300.0</text>
<text x="634.7" y="130.8" text-anchor="middle" font-family="Liberation Sans, sans-serif" font-size="6.9" fill="#111">50.0</text>
<text x="644.6" y="268.6" text-anchor="middle" font-family="Liberation Sans, sans-serif" font-size="6.9" fill="#111">12.0</text>
<text transform="translate(566.1 139.0) rotate(-90)" text-anchor="middle" font-family="Liberation Sans, sans-serif" font-size="6.9" fill="#111">22.5</text>
<text transform="translate(552.2 232.0) rotate(-90)" text-anchor="middle" font-family="Liberation Sans, sans-serif" font-size="6.9" fill="#111">512.5</text>
<text transform="translate(566.6 235.7) rotate(-90)" text-anchor="middle" font-family="Liberation Sans, sans-serif" font-size="6.9" fill="#111">490.0</text>
<text transform="translate(698.1 189.0) rotate(-90)" text-anchor="middle" font-family="Liberation Sans, sans-serif" font-size="6.9" fill="#111">253.7</text>
<text transform="translate(698.1 302.0) rotate(-90)" text-anchor="middle" font-family="Liberation Sans, sans-serif" font-size="6.9" fill="#111">23.0</text>
<text x="702.4" y="335.4" font-family="Liberation Sans, sans-serif" font-size="6.9" fill="#111">[mm]</text>
</svg>
<div class="ib" style="left:487.5px;top:302.0px"><svg class="a" style="left:1.8px;top:0.5px" width="10" height="10" viewBox="0 0 9 9"><circle cx="4.5" cy="4.5" r="4.3" fill="url(#gie)"/><circle cx="4.6" cy="2.3" r="0.95" fill="#fff"/><path d="M3.4 3.9h2v3h.6v.8H3.3v-.8h.7V4.7h-.6z" fill="#fff"/></svg></div>
<div class="ib" style="background:#cce4f7;border-color:#1a7ad4;left:582.0px;top:302px"><svg class="a" style="left:1.5px;top:1px" width="11" height="10" viewBox="0 0 11 10"><path d="M5.5 1.6L2.4 7M5.5 1.6L8.8 7" stroke="#666" stroke-width="0.5"/><path d="M4.4 1L6.6 2.6M6.6 1L4.4 2.6" stroke="#333" stroke-width="0.6"/><path d="M2.5 7.3H8.5" stroke="#2a58c8" stroke-width="1.3"/><circle cx="2.8" cy="7.2" r="1.4" fill="#3a6ad8"/><path d="M7.6 5.4L10.6 7.3L7.6 9.2Z" fill="#2a58c8"/></svg></div><div class="ib" style="left:601.3px;top:302px"><svg class="a" style="left:2px;top:1px" width="10" height="10" viewBox="0 0 10 10"><path d="M1.8 1.5H8.2M1.8 8.7H8.2M5 1.5V8.7" stroke="#222" stroke-width="0.75"/><g fill="#d42020"><circle cx="1.7" cy="1.5" r="0.85"/><circle cx="8.3" cy="1.5" r="0.85"/><circle cx="1.7" cy="8.7" r="0.85"/><circle cx="8.3" cy="8.7" r="0.85"/><circle cx="5" cy="1.5" r="0.7"/><circle cx="5" cy="8.7" r="0.7"/><circle cx="5" cy="5.1" r="0.7"/></g></svg></div><div class="ib d" style="left:620.0px;top:302px"><svg class="a" style="left:2px;top:2px" width="10" height="8" viewBox="0 0 10 8"><rect x="0.6" y="1.2" width="8.8" height="5.6" fill="#dedede" stroke="#a4a4a4" stroke-width="0.6"/><path d="M2.2 2.6V5.4M3.6 2.8L5 4L3.6 5.3M6 2.8L7.6 4L6 5.3" stroke="#f8f8f8" stroke-width="0.8" fill="none"/></svg></div><div class="ib" style="left:639.2px;top:302px"><svg class="a" style="left:2px;top:1px" width="10" height="10" viewBox="0 0 10 10"><path d="M2.6 2.2V8M2.6 2.2H8" stroke="#333" stroke-width="0.8"/><circle cx="2.6" cy="2.2" r="1.1" fill="#3a62c8"/><path d="M1.2 7.2L2.6 9.6L4 7.2Z" fill="#3a62c8"/><path d="M7.2 0.9L9.8 2.2L7.2 3.5Z" fill="#3a62c8"/></svg></div><div class="ib" style="left:661.3px;top:302px"><svg class="a" style="left:1.5px;top:0.5px" width="11" height="11" viewBox="0 0 11 11"><circle cx="4.4" cy="5" r="2.7" fill="#f4f4f4" stroke="#1a1a1a" stroke-width="1.1"/><path d="M6.3 7.2L9.2 10.2" stroke="#1a1a1a" stroke-width="1.6"/><path d="M5.6 1.2L10.2 6M10.4 1.2L5.8 6" stroke="#4a76e0" stroke-width="1.1"/></svg></div>
<div class="grp" style="left:484.6px;top:324.3px;width:195.4px;height:120.7px"><div class="gh" style="letter-spacing:-0.216px;padding-left:0.8px">Options</div></div>
<svg class="a" style="left:485.6px;top:338.9px" width="9" height="9" viewBox="0 0 9 9"><rect x="0.4" y="0.4" width="8.2" height="8.2" rx="0.6" fill="#fff" stroke="#5c5c5c" stroke-width="0.8"/><path d="M2 4.9L4 6.7L7.7 2.2" fill="none" stroke="#2a2a2a" stroke-width="0.75"/></svg>
<div class="t " style="left:497.0px;top:338.8px;letter-spacing:-0.131px;">25% reduction of the splice section due to wear</div>
<svg class="a" style="left:485.6px;top:363.0px" width="9" height="9" viewBox="0 0 9 9"><rect x="0.4" y="0.4" width="8.2" height="8.2" rx="0.6" fill="#fff" stroke="#5c5c5c" stroke-width="0.8"/><path d="M2 4.9L4 6.7L7.7 2.2" fill="none" stroke="#2a2a2a" stroke-width="0.75"/></svg>
<div class="t " style="left:497.0px;top:362.9px;letter-spacing:-0.160px;">Consider rail section for the cross-section properties</div>
<div class="btn" style="left:114.0px;top:458.5px;width:51.0px;letter-spacing:-0.218px;text-indent:-0.218px;">Calculation</div>
<div class="btn" style="left:171.0px;top:458.5px;width:51.0px;letter-spacing:-0.107px;text-indent:-0.107px;">Details...</div>
<div class="btn" style="left:228.0px;top:458.5px;width:51.5px;letter-spacing:-0.219px;text-indent:-0.219px;">3D Rendering</div>
<div class="btn" style="left:285.2px;top:458.5px;width:51.3px;letter-spacing:-0.069px;text-indent:-0.069px;">Nat. Annex...</div>
<div class="btn d" style="left:342.3px;top:458.5px;width:50.7px;letter-spacing:-0.328px;text-indent:-0.328px;">Graphics</div>
<div class="btn" style="left:582.3px;top:458.5px;width:46.0px;letter-spacing:-1.361px;text-indent:-1.361px;border-color:#1478d8;box-shadow:inset 0 0 0 1px #9cc6ee;font-size:6.6px;letter-spacing:0">OK</div>
<div class="btn" style="left:634.0px;top:458.5px;width:46.2px;letter-spacing:-0.434px;text-indent:-0.434px;">Cancel</div>
<div class="ib" style="left:6.0px;top:458.5px"><svg class="a" style="left:2px;top:1px" width="10" height="10" viewBox="0 0 10 10"><ellipse cx="5" cy="4.5" rx="4.3" ry="3.8" fill="#f2f2f2" stroke="#555" stroke-width="0.6"/><path d="M2.5 7.5L1 9.6L4 8.2Z" fill="#f2f2f2" stroke="#555" stroke-width="0.5"/><text x="5" y="7" text-anchor="middle" font-family="Liberation Sans, sans-serif" font-weight="bold" font-size="6.5" fill="#1a1a5a">?</text></svg></div><div class="ib" style="left:27.3px;top:458.5px"><svg class="a" style="left:1.5px;top:1px" width="11" height="10" viewBox="0 0 11 10"><rect x="3.5" y="0.8" width="6.5" height="6" fill="#e8e8e8" stroke="#333" stroke-width="0.7"/><rect x="3.5" y="0.8" width="6.5" height="1.4" fill="#1a3a9a"/><path d="M0.5 6.5L3.8 3.8V5.4H7V7.6H3.8V9.2Z" fill="#3a6ae0" stroke="#12307a" stroke-width="0.4"/></svg></div><div class="ib" style="left:46.5px;top:458.5px"><svg class="a" style="left:1.5px;top:1px" width="11" height="10" viewBox="0 0 11 10"><rect x="1" y="0.8" width="6.5" height="6" fill="#e8e8e8" stroke="#333" stroke-width="0.7"/><rect x="1" y="0.8" width="6.5" height="1.4" fill="#1a3a9a"/><path d="M10.5 6.5L7.2 3.8V5.4H4V7.6H7.2V9.2Z" fill="#3a6ae0" stroke="#12307a" stroke-width="0.4"/></svg></div>
</div>
<svg class="a" style="left:0;top:0" width="760" height="20" viewBox="0 0 760 20">
<rect x="0" y="4.5" width="1.3" height="11" fill="#fff"/>
<g fill="none" stroke="#333" stroke-width="0.9"><rect x="5.5" y="6" width="3.2" height="2.2" rx="1"/><rect x="5.5" y="12" width="3.2" height="2.2" rx="1"/><path d="M8.7 7.1H11L13 9.5M8.7 13.1H11L13 10.5"/></g><path d="M12.5 8.3L16 10.2L12.5 12Z" fill="#2a7ae0"/>
<path d="M19.5 10.1h3.4l-1.7 2z" fill="#555"/>
<path d="M28.7 5.5V15.5" stroke="#8a90a2" stroke-width="0.9" stroke-dasharray="1 1.4"/>
<g><rect x="34.5" y="6" width="9.5" height="9" rx="2" fill="#6a5a50"/><circle cx="38" cy="8.5" r="2" fill="#b89a88"/><rect x="39.5" y="10.5" width="3" height="3" fill="#e8e8e8" stroke="#222" stroke-width="0.5"/><path d="M34 15L36 12M44.5 6L42.5 8M34.5 6L36 7.5M44.5 15.5L43 14" stroke="#222" stroke-width="0.9"/></g>
<g><circle cx="52.3" cy="9.3" r="3.4" fill="#e4ecfa" stroke="#2a4aa8" stroke-width="1.2"/><path d="M54.8 12L57.6 15" stroke="#5a7ad0" stroke-width="1.6"/><rect x="53.5" y="6.2" width="3.5" height="4" fill="#e8e8f0" stroke="#555" stroke-width="0.5"/><circle cx="57" cy="6.2" r="0.9" fill="#e02020"/><circle cx="53" cy="10.5" r="0.8" fill="#e02020"/></g>
<g><circle cx="66" cy="9.6" r="3.3" fill="#e4ecfa" stroke="#2a4aa8" stroke-width="1.2"/><path d="M68.5 12.3L71.3 15.2" stroke="#5a7ad0" stroke-width="1.6"/><path d="M66.5 5.8L71 10.5M71 5.8L66.5 10.5" stroke="#e02020" stroke-width="1.3"/></g>
<g fill="none" stroke="#5a6a9a" stroke-width="0.8"><rect x="76.5" y="8" width="7" height="7" fill="#e8ecf6"/><path d="M76.5 8L79 5.8H86V12.8L83.5 15M83.5 8L86 5.8M79 5.8V8"/></g>
<g fill="#d4daee" stroke="#6a78a8" stroke-width="0.7"><path d="M94 8.5L96 6.5H100V10.5L98.5 12.5H94Z"/><rect x="90.5" y="10.5" width="5" height="5" fill="#e8ecf6"/><path d="M90.5 10.5L92 9H97V14L95.5 15.5" fill="none"/></g>
<path d="M104.0 5V16" stroke="#b4bacb" stroke-width="0.8"/>
<path d="M109.5 7H117.5" stroke="#e02828" stroke-width="1.6"/><path d="M116.2 7h1.8" stroke="#28b040" stroke-width="1.8"/><path d="M110.3 7.5V13" stroke="#2a50d8" stroke-width="1.5"/><path d="M108.6 12.4h3.4l-1.7 2.6z" fill="#2a50d8"/><text x="112.6" y="14.6" font-size="5.8" font-family="Liberation Sans, sans-serif" fill="#222">X</text>
<path d="M123.8 7H131.8" stroke="#e02828" stroke-width="1.6"/><path d="M130.5 7h1.8" stroke="#28b040" stroke-width="1.8"/><path d="M131.2 7.5V13" stroke="#2a50d8" stroke-width="1.5"/><path d="M129.5 12.4h3.4l-1.7 2.6z" fill="#2a50d8"/><text x="123.6" y="14.6" font-size="5.8" font-family="Liberation Sans, sans-serif" fill="#222">Y</text>
<path d="M137.5 7H145.5" stroke="#e02828" stroke-width="1.6"/><path d="M144.2 7h1.8" stroke="#e02828" stroke-width="1.8"/><path d="M138.6 7.5V13" stroke="#28a838" stroke-width="1.5"/><path d="M136.9 12.4h3.4l-1.7 2.6z" fill="#28a838"/><text x="141.3" y="14.6" font-size="5.8" font-family="Liberation Sans, sans-serif" fill="#222">Z</text>
<path d="M152.5 7H160.5" stroke="#28a838" stroke-width="1.6"/><path d="M159.2 7h1.8" stroke="#e02828" stroke-width="1.8"/><path d="M160.0 7.5V13" stroke="#2a50d8" stroke-width="1.5"/><path d="M158.3 12.4h3.4l-1.7 2.6z" fill="#2a50d8"/><text x="152.0" y="14.6" font-size="5.8" font-family="Liberation Sans, sans-serif" fill="#222">-X</text>
<circle cx="160.5" cy="7" r="1.4" fill="#e02020"/>
<path d="M165.8 10.1h3.4l-1.7 2z" fill="#555"/>
<g><rect x="174.3" y="5.8" width="4.6" height="3.6" fill="#f0e850" stroke="#555" stroke-width="0.5"/><path d="M177.5 10L183.5 6" stroke="#222" stroke-width="1.6"/><path d="M179.5 9.5L181.5 13.5" stroke="#222" stroke-width="1.4"/><path d="M176.5 14.7H184" stroke="#111" stroke-width="1.5"/></g>
<path d="M187.8 10.1h3.4l-1.7 2z" fill="#555"/>
<path d="M195.8 5V16" stroke="#b4bacb" stroke-width="0.8"/>
<g><path d="M202 8L205 5.8L211 7.5V12.5L207.5 15.5L202.5 13Z" fill="#7a92b8" stroke="#4a5a80" stroke-width="0.6"/><path d="M204.5 9L207.5 8L209.5 9.5V12L206.5 13.2L204.5 12Z" fill="#c4d2ea"/></g>
<path d="M215.3 10.1h3.4l-1.7 2z" fill="#555"/>
<path d="M224.6 5.5V15.5" stroke="#8a90a2" stroke-width="0.9" stroke-dasharray="1 1.4"/>
<g><path d="M231.5 14L233.5 8H239L237.5 14" fill="none" stroke="#909090" stroke-width="1.1"/><circle cx="233.5" cy="8" r="0.7" fill="#e03030"/><circle cx="239" cy="8" r="0.7" fill="#e03030"/><circle cx="231.5" cy="14" r="0.7" fill="#30a840"/><circle cx="237.5" cy="14" r="0.7" fill="#30a840"/></g>
<g><rect x="244.8" y="8" width="9" height="5" rx="2.5" fill="#b8b8b8" stroke="#8a8a8a" stroke-width="0.5"/><rect x="247.5" y="9.6" width="1.6" height="1.6" fill="#e8e050"/><rect x="249.6" y="9.6" width="1.6" height="1.6" fill="#e06060"/></g>
<path d="M258.2 5V16" stroke="#b4bacb" stroke-width="0.8"/>
<g><path d="M266 6H271M268.5 6V11M266 11H271" stroke="#7a8ab8" stroke-width="1" fill="none"/><path d="M263 14L273 11.5" stroke="#8a8a8a" stroke-width="0.8"/><path d="M263 15L266 13.3L263 13Z" fill="#3a52e0"/><path d="M273 12.5L270 12L273 10.5Z" fill="#e04040"/></g>
<rect x="276.8" y="8.2" width="10.2" height="2.3" fill="#4a5ae0"/><text x="280" y="15.6" font-size="5.2" font-family="Liberation Sans, sans-serif" fill="#333">N</text>
<path d="M290.3 9.9L300.6 6.2V8.4Z" fill="#a4a8d4"/><path d="M290.3 9.9L294.8 8.5V9.3Z" fill="#3a4ae8"/><path d="M297.6 7.2L300.6 6.2V8.4L297.6 8.7Z" fill="#e85a5a"/><text x="295.9" y="15.8" font-size="5.2" text-anchor="middle" font-family="Liberation Sans, sans-serif" fill="#444">Vy</text>
<path d="M304.5 9.9L314.8 6.2V8.4Z" fill="#a4a8d4"/><path d="M304.5 9.9L309.0 8.5V9.3Z" fill="#3a4ae8"/><path d="M311.8 7.2L314.8 6.2V8.4L311.8 8.7Z" fill="#e85a5a"/><text x="310.1" y="15.8" font-size="5.2" text-anchor="middle" font-family="Liberation Sans, sans-serif" fill="#444">Vz</text>
<path d="M318.5 9.9L328.8 6.2V8.4Z" fill="#a4a8d4"/><path d="M318.5 9.9L323.0 8.5V9.3Z" fill="#3a4ae8"/><path d="M325.8 7.2L328.8 6.2V8.4L325.8 8.7Z" fill="#e85a5a"/><text x="324.1" y="15.8" font-size="5.2" text-anchor="middle" font-family="Liberation Sans, sans-serif" fill="#444">M<tspan font-size="4.2">T</tspan></text>
<path d="M332.4 9.9L342.7 6.2V8.4Z" fill="#a4a8d4"/><path d="M332.4 9.9L336.9 8.5V9.3Z" fill="#3a4ae8"/><path d="M339.7 7.2L342.7 6.2V8.4L339.7 8.7Z" fill="#e85a5a"/><text x="338.0" y="15.8" font-size="5.2" text-anchor="middle" font-family="Liberation Sans, sans-serif" fill="#444">My</text>
<path d="M346.2 9.9L356.5 6.2V8.4Z" fill="#a4a8d4"/><path d="M346.2 9.9L350.7 8.5V9.3Z" fill="#3a4ae8"/><path d="M353.5 7.2L356.5 6.2V8.4L353.5 8.7Z" fill="#e85a5a"/><text x="351.8" y="15.8" font-size="5.2" text-anchor="middle" font-family="Liberation Sans, sans-serif" fill="#444">Mz</text>
<path d="M360.3 7.6L370.6 8.6V10.2Z" fill="#7a86dc"/><text x="365.9" y="15.8" font-size="5.2" text-anchor="middle" font-family="Liberation Sans, sans-serif" fill="#444">py</text>
<path d="M374.5 7.6L384.8 8.6V10.2Z" fill="#7a86dc"/><text x="380.1" y="15.8" font-size="5.2" text-anchor="middle" font-family="Liberation Sans, sans-serif" fill="#444">pz</text>
<path d="M389.0 5V16" stroke="#b4bacb" stroke-width="0.8"/>
<g fill="#5ab868"><path d="M397.5 5.8L400.5 9H394.5Z"/><rect x="396.5" y="9" width="2" height="1.5"/><path d="M397.5 11L400 13.5H398.5V15.5H396.5V13.5H395Z"/><path d="M400.5 6.5H403.5V8.5H400.5Z" fill="#8ad098"/></g>
<g><path d="M410 6H415M412.5 6V10.5M410 10.5H415" stroke="#7a8ab8" stroke-width="1" fill="none"/><path d="M407.5 13C409 16 411.5 16 412.5 13" stroke="#3a4ae0" stroke-width="1" fill="none"/><path d="M412.5 13C413.5 10.5 416 11 417.5 13" stroke="#e04040" stroke-width="1" fill="none"/><path d="M407 13H418" stroke="#888" stroke-width="0.5"/></g>
<g fill="#dfe6f6" stroke="#7a88b8" stroke-width="0.7"><rect x="421.3" y="6" width="4.4" height="4.2"/><rect x="426.4" y="6" width="4.4" height="4.2"/><rect x="421.3" y="10.9" width="4.4" height="4.2"/><rect x="426.4" y="10.9" width="4.4" height="4.2"/></g><circle cx="423.5" cy="8" r="0.7" fill="#e05050"/><circle cx="428.5" cy="13" r="0.7" fill="#e05050"/><circle cx="428.5" cy="8" r="0.7" fill="#5060e0"/>
<path d="M435.8 5V16" stroke="#b4bacb" stroke-width="0.8"/>
<g><rect x="441.3" y="5.8" width="7.6" height="9.6" fill="#d8d8d8" stroke="#8a8a8a" stroke-width="0.6"/><rect x="442.3" y="7" width="3" height="1.6" fill="#e05050"/><rect x="442.3" y="8.6" width="3" height="1.6" fill="#e0c040"/><rect x="442.3" y="10.2" width="3" height="1.6" fill="#50b050"/><rect x="442.3" y="11.8" width="3" height="1.6" fill="#5080e0"/><rect x="446" y="7" width="2" height="7" fill="#f0f0f0"/></g>
<path d="M457.2 5.5V15.5" stroke="#8a90a2" stroke-width="0.9" stroke-dasharray="1 1.4"/>
<rect x="464.8" y="5.9" width="6.8" height="4.4" fill="#3f4fb4"/><rect x="466.8" y="7" width="2.8" height="2" fill="none" stroke="#8a9ae8" stroke-width="0.5"/><path d="M465.8 11.5L470.8 10.8V11.5H471.3V15.2H465.8Z" fill="#111"/><rect x="466.8" y="12.6" width="3.6" height="1.8" fill="#f4f4f4"/>
<path d="M476.7 10.1h3.4l-1.7 2z" fill="#555"/>
<rect x="487.1" y="5.9" width="6.8" height="4.4" fill="#3f4fb4"/><rect x="489.1" y="7" width="2.8" height="2" fill="none" stroke="#8a9ae8" stroke-width="0.5"/><rect x="488.2" y="11.8" width="5" height="3.4" fill="#f4f4f4" stroke="#111" stroke-width="0.9"/><path d="M489.6 11.5V10.6H491.8V11.5" fill="none" stroke="#111" stroke-width="0.8"/>
<path d="M498.9 10.1h3.4l-1.7 2z" fill="#555"/>
<path d="M508.6 5.5V15.5" stroke="#8a90a2" stroke-width="0.9" stroke-dasharray="1 1.4"/>
<rect x="517.1" y="5.9" width="6.8" height="4.4" fill="#3f4fb4"/><rect x="519.1" y="7" width="2.8" height="2" fill="none" stroke="#8a9ae8" stroke-width="0.5"/><path d="M515.4 11.6H519.4M515.4 13.6H519.4" stroke="#111" stroke-width="0.9"/><rect x="520.2" y="11.2" width="5" height="4" fill="#f4f4f4" stroke="#111" stroke-width="0.9"/><rect x="523.6" y="11.2" width="1.6" height="4" fill="#111"/>
<path d="M528.5 10.1h3.4l-1.7 2z" fill="#555"/>
<rect x="539.3" y="5.9" width="6.8" height="4.4" fill="#3f4fb4"/><rect x="541.3" y="7" width="2.8" height="2" fill="none" stroke="#8a9ae8" stroke-width="0.5"/><path d="M537.6 11.6H541.6M537.6 13.6H541.6" stroke="#111" stroke-width="0.9"/><rect x="542.4" y="11.8" width="5.6" height="3.4" fill="#f4f4f4" stroke="#111" stroke-width="0.9"/>
<path d="M550.9 10.1h3.4l-1.7 2z" fill="#555"/>
<rect x="561.3" y="5.9" width="6.8" height="4.4" fill="#3f4fb4"/><rect x="563.3" y="7" width="2.8" height="2" fill="none" stroke="#8a9ae8" stroke-width="0.5"/><path d="M559.6 11.6H563.6M559.6 13.6H563.6" stroke="#111" stroke-width="0.9"/><rect x="564.6" y="11.6" width="5.2" height="3.6" fill="#f4f4f4" stroke="#111" stroke-width="0.9"/><path d="M568.3 11.6L569.8 10.4" stroke="#111" stroke-width="0.8"/>
<path d="M573.0 10.1h3.4l-1.7 2z" fill="#555"/>
<rect x="583.5" y="5.9" width="6.8" height="4.4" fill="#3f4fb4"/><rect x="585.5" y="7" width="2.8" height="2" fill="none" stroke="#8a9ae8" stroke-width="0.5"/><path d="M581.8 11.6H585.8M581.8 13.6H585.8" stroke="#111" stroke-width="0.9"/><rect x="586.6" y="11.8" width="5.4" height="3.4" fill="#f4f4f4" stroke="#111" stroke-width="0.9"/><path d="M588.0 11.5V10.6H590.4V11.5" fill="none" stroke="#111" stroke-width="0.8"/>
<path d="M595.3 10.1h3.4l-1.7 2z" fill="#555"/>
<rect x="605.7" y="5.9" width="6.8" height="4.4" fill="#3f4fb4"/><rect x="607.7" y="7" width="2.8" height="2" fill="none" stroke="#8a9ae8" stroke-width="0.5"/><path d="M604.0 11.6H608.0M604.0 13.6H608.0" stroke="#111" stroke-width="0.9"/><rect x="609.0" y="11.4" width="5" height="3.9" fill="#111"/><rect x="610.2" y="12.6" width="2.4" height="2" fill="#f4f4f4"/>
<path d="M617.3 10.1h3.4l-1.7 2z" fill="#555"/>
</svg>
</body></html>
